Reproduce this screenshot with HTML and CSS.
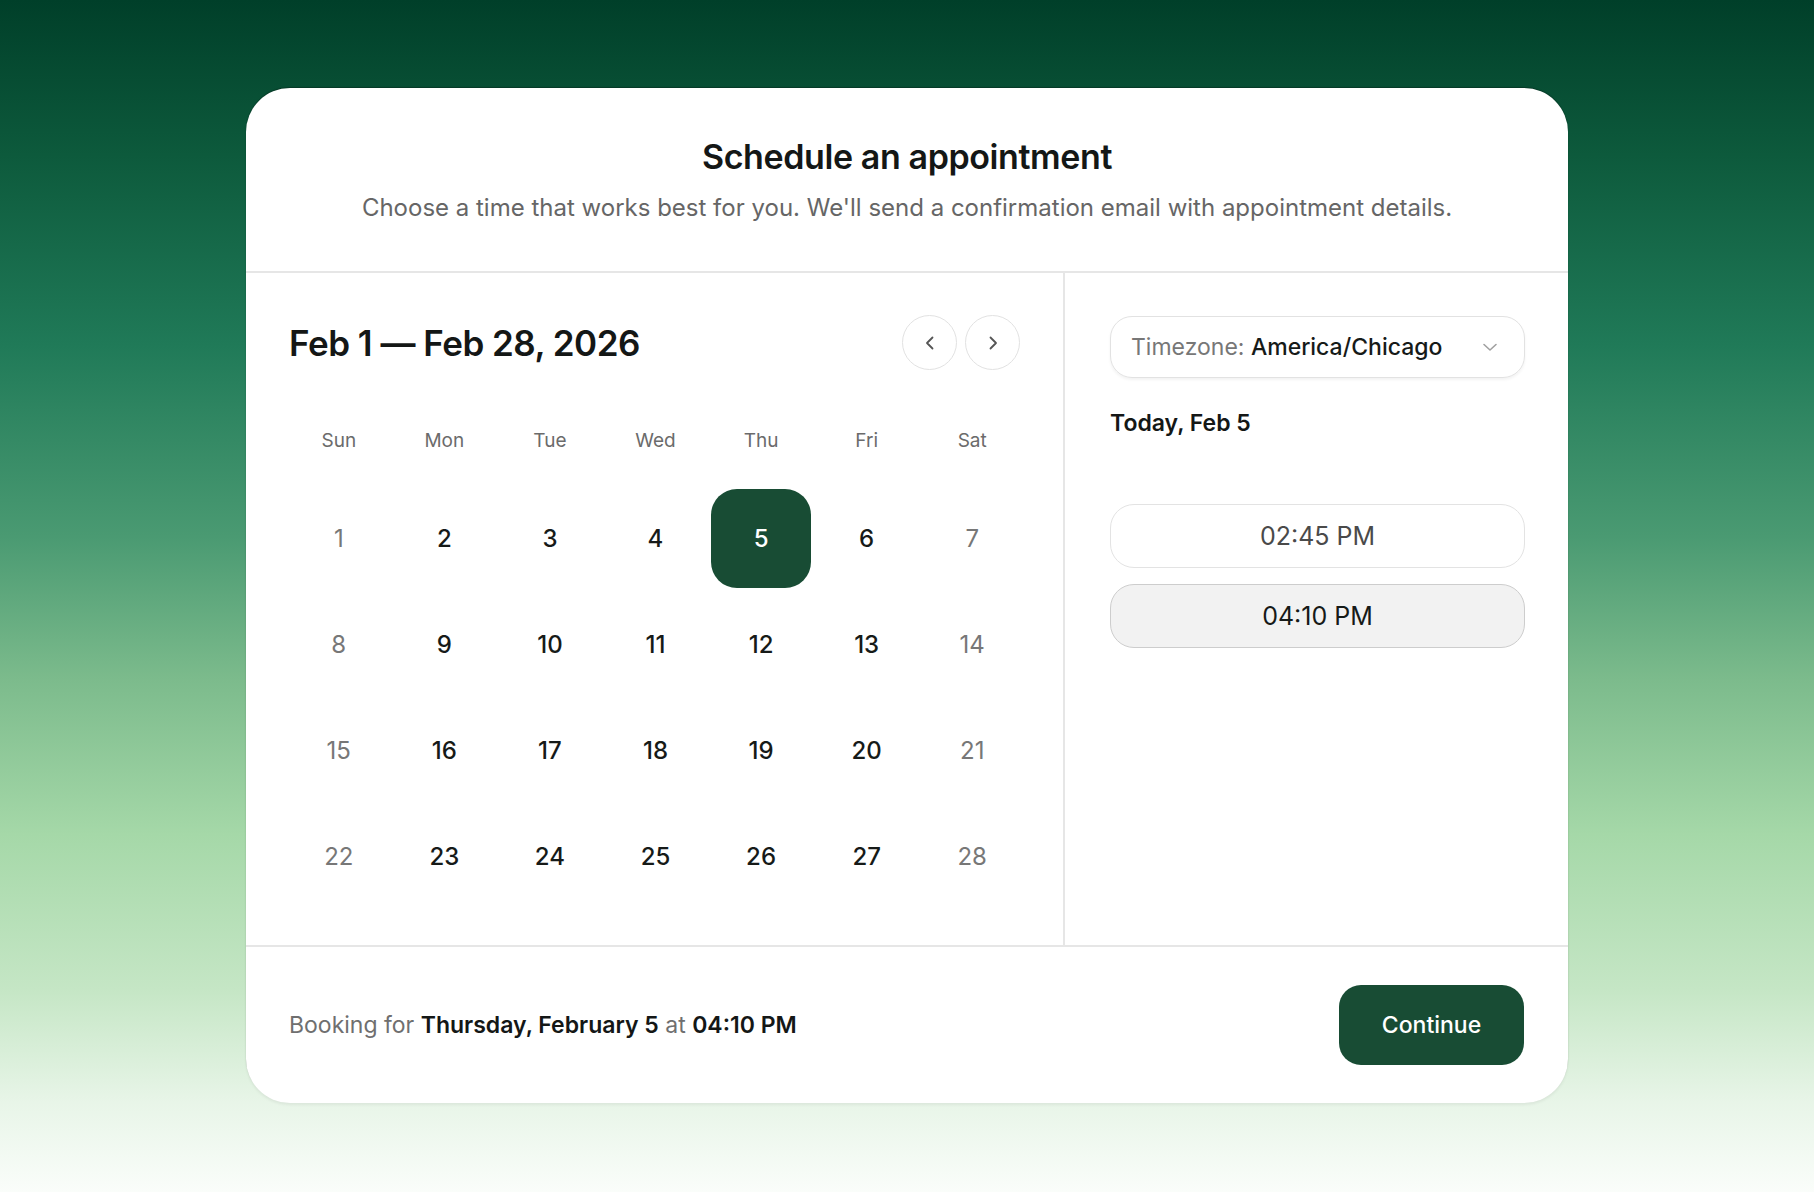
FILE: index.html
```html
<!DOCTYPE html>
<html lang="en">
<head>
<meta charset="utf-8">
<title>Schedule an appointment</title>
<link rel="stylesheet" href="styles.css">
</head>
<body>
<main class="card">
  <header class="card-header">
    <h1 class="title">Schedule an appointment</h1>
    <p class="subtitle">Choose a time that works best for you. We'll send a confirmation email with appointment details.</p>
  </header>
  <section class="card-body">
    <div class="calendar">
      <div class="cal-head">
        <h2 class="month">Feb 1 — Feb 28, 2026</h2>
        <div class="nav">
          <button class="nav-btn" aria-label="Previous">
            <svg viewBox="0 0 24 24" width="24" height="24"><polyline points="14.5 6.5 9 12 14.5 17.5" fill="none" stroke="#555" stroke-width="1.8" stroke-linecap="round" stroke-linejoin="round"/></svg>
          </button>
          <button class="nav-btn" aria-label="Next">
            <svg viewBox="0 0 24 24" width="24" height="24"><polyline points="9.5 6.5 15 12 9.5 17.5" fill="none" stroke="#555" stroke-width="1.8" stroke-linecap="round" stroke-linejoin="round"/></svg>
          </button>
        </div>
      </div>
      <div class="weekdays">
        <span>Sun</span><span>Mon</span><span>Tue</span><span>Wed</span><span>Thu</span><span>Fri</span><span>Sat</span>
      </div>
      <div class="days">
        <span class="day weekend">1</span><span class="day">2</span><span class="day">3</span><span class="day">4</span><span class="day selected">5</span><span class="day">6</span><span class="day weekend">7</span>
        <span class="day weekend">8</span><span class="day">9</span><span class="day">10</span><span class="day">11</span><span class="day">12</span><span class="day">13</span><span class="day weekend">14</span>
        <span class="day weekend">15</span><span class="day">16</span><span class="day">17</span><span class="day">18</span><span class="day">19</span><span class="day">20</span><span class="day weekend">21</span>
        <span class="day weekend">22</span><span class="day">23</span><span class="day">24</span><span class="day">25</span><span class="day">26</span><span class="day">27</span><span class="day weekend">28</span>
      </div>
    </div>
    <aside class="times">
      <div class="tz-select">
        <span class="tz-text"><span class="tz-label">Timezone:</span> <span class="tz-value">America/Chicago</span></span>
        <svg class="tz-chevron" viewBox="0 0 24 24" width="24" height="24"><polyline points="6 9.5 12 15 18 9.5" fill="none" stroke="#a0a0a0" stroke-width="1.6" stroke-linecap="round" stroke-linejoin="round"/></svg>
      </div>
      <h3 class="today">Today, Feb 5</h3>
      <div class="slots">
        <button class="slot">02:45 PM</button>
        <button class="slot active">04:10 PM</button>
      </div>
    </aside>
  </section>
  <footer class="card-footer">
    <p class="summary">Booking for <strong>Thursday, February 5</strong> at <strong>04:10 PM</strong></p>
    <button class="continue">Continue</button>
  </footer>
</main>
</body>
</html>
```
FILE: styles.css
```css
* { box-sizing: border-box; }

html, body {
  margin: 0;
  padding: 0;
}

body {
  width: 1814px;
  height: 1192px;
  overflow: hidden;
  font-family: Inter, "Noto Sans", "Liberation Sans", sans-serif;
  color: #161a18;
  background: linear-gradient(180deg,
    #003f29 0%,
    #0d5a3c 13%,
    #207a58 29%,
    #4a9a72 45%,
    #7cbb8c 57%,
    #a5d8a8 70%,
    #c5e6c5 83%,
    #e8f5e8 92.5%,
    #fafdfa 100%);
  display: flex;
  justify-content: center;
  padding-top: 88px;
}

.card {
  width: 1322px;
  height: 1015px;
  background: #fff;
  border-radius: 44px;
  overflow: hidden;
  display: flex;
  flex-direction: column;
  box-shadow: 0 -1px 1px rgba(0, 0, 0, 0.28), 0 2px 3px rgba(0, 0, 0, 0.06);
}

/* Header */
.card-header {
  height: 185px;
  flex: none;
  border-bottom: 2px solid #e6e6e6;
  text-align: center;
  padding-top: 46px;
}

.title {
  margin: 0;
  font-size: 34px;
  line-height: 46px;
  font-weight: 600;
  letter-spacing: -0.4px;
  color: #141716;
}

.subtitle {
  margin: 11px 0 0;
  font-size: 24px;
  line-height: 34px;
  font-weight: 400;
  color: #666;
}

/* Body */
.card-body {
  height: 674px;
  flex: none;
  display: flex;
  border-bottom: 2px solid #e6e6e6;
}

.calendar {
  width: 819px;
  flex: none;
  border-right: 2px solid #e6e6e6;
  padding: 42px 41px 0 43px;
}

.cal-head {
  height: 55px;
  display: flex;
  align-items: center;
  justify-content: space-between;
}

.month {
  margin: 0;
  font-size: 35px;
  font-weight: 600;
  letter-spacing: -0.5px;
  color: #141716;
}

.nav {
  display: flex;
  gap: 8px;
  margin-right: 2px;
}

.nav-btn {
  width: 55px;
  height: 55px;
  border-radius: 50%;
  border: 1.5px solid #e2e2e2;
  background: #fff;
  padding: 0;
  display: flex;
  align-items: center;
  justify-content: center;
}

.weekdays {
  margin-top: 50px;
  height: 40px;
  display: grid;
  grid-template-columns: repeat(7, 1fr);
  column-gap: 6px;
  align-items: center;
  text-align: center;
  font-size: 19px;
  color: #6b6b6b;
}

.days {
  margin-top: 29px;
  display: grid;
  grid-template-columns: repeat(7, 1fr);
  grid-auto-rows: 99px;
  column-gap: 6px;
  row-gap: 7px;
}

.day {
  display: flex;
  align-items: center;
  justify-content: center;
  font-size: 24px;
  font-weight: 500;
  color: #161a18;
  border-radius: 26px;
}

.day.weekend {
  color: #777;
  font-weight: 400;
}

.day.selected {
  background: #184c34;
  color: #fff;
}

/* Times */
.times {
  flex: 1;
  padding: 43px 43px 0 45px;
}

.tz-select {
  height: 62px;
  border: 1.5px solid #e2e2e2;
  border-radius: 22px;
  box-shadow: 0 2px 3px rgba(0, 0, 0, 0.05);
  display: flex;
  align-items: center;
  justify-content: space-between;
  padding: 0 22px 0 20px;
  font-size: 23px;
}

.tz-label { color: #777; }
.tz-value { color: #161a18; font-weight: 500; }

.today {
  margin: 30px 0 0;
  font-size: 23px;
  line-height: 30px;
  font-weight: 600;
  color: #141716;
}

.slots {
  margin-top: 66px;
  display: flex;
  flex-direction: column;
  gap: 16px;
}

.slot {
  height: 64px;
  border-radius: 24px;
  border: 1.5px solid #e3e3e3;
  background: #fff;
  font-family: inherit;
  font-size: 25px;
  font-weight: 400;
  color: #4a4a4a;
}

.slot.active {
  background: #f2f2f2;
  border-color: #cdcdcd;
  color: #161a18;
}

/* Footer */
.card-footer {
  flex: 1;
  display: flex;
  align-items: center;
  justify-content: space-between;
  padding: 0 44px 0 43px;
}

.summary {
  margin: 0;
  font-size: 23px;
  color: #6f6f6f;
}

.summary strong {
  color: #141716;
  font-weight: 600;
}

.continue {
  width: 185px;
  height: 80px;
  border: none;
  border-radius: 22px;
  background: #184c34;
  color: #fff;
  font-family: inherit;
  font-size: 23px;
  font-weight: 500;
}
```
